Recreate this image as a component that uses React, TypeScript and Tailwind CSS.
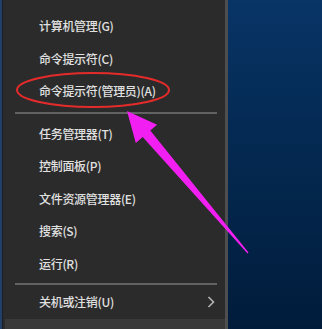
import React from "react";

const font = { fontFamily: '"Noto Sans CJK SC", "Microsoft YaHei", sans-serif' };

function Item({ label, h = "h-[32.5px]", chevron = false }: { label: string; h?: string; chevron?: boolean }) {
  return (
    <div className={`${h} flex items-center pl-[36px] pr-[8px] text-[12px] font-medium tracking-[-0.3px] text-[#e0e0e0] leading-none`}>
      <span className="flex-1 whitespace-nowrap">{label}</span>
      {chevron && (
        <svg width="8" height="12" viewBox="0 0 8 12" className="mr-[2px]">
          <path d="M1.5 1 L6.5 6 L1.5 11" fill="none" stroke="#b4b4b4" strokeWidth="1.6" />
        </svg>
      )}
    </div>
  );
}

function Sep({ h }: { h: string }) {
  return (
    <div className={`${h} flex items-center pl-[12px] pr-[8px]`}>
      <div className="h-[2px] w-full bg-[#626262]" />
    </div>
  );
}

export default function App() {
  const tip = [127, 111];
  const end = [248, 253];
  const dx = end[0] - tip[0];
  const dy = end[1] - tip[1];
  const len = Math.hypot(dx, dy);
  const u = [dx / len, dy / len];
  const p = [u[1], -u[0]];
  const headLen = 30;
  const base = [tip[0] + u[0] * headLen, tip[1] + u[1] * headLen];
  const hw = 14;
  const sw = 5;
  const ew = 0.6;
  const pts = [
    tip,
    [base[0] + p[0] * hw, base[1] + p[1] * hw],
    [base[0] + p[0] * sw, base[1] + p[1] * sw],
    [end[0] + p[0] * ew, end[1] + p[1] * ew],
    [end[0] - p[0] * ew, end[1] - p[1] * ew],
    [base[0] - p[0] * sw, base[1] - p[1] * sw],
    [base[0] - p[0] * hw, base[1] - p[1] * hw],
  ]
    .map((q) => `${q[0].toFixed(1)},${q[1].toFixed(1)}`)
    .join(" ");

  return (
    <div className="relative w-[322px] h-[329px] flex overflow-hidden bg-[#2b2b2b]" style={font}>
      <div className="w-[2px] h-full bg-[#22406a]" />
      <div className="w-[1px] h-full bg-[#1a1f28]" />
      <div className="w-[225px] h-full flex flex-col bg-[#2b2b2b] border-r-[3px] border-[#4e4e4e]">
        <div className="h-[10px]" />
        <Item label="计算机管理(G)" />
        <Item label="命令提示符(C)" />
        <Item label="命令提示符(管理员)(A)" />
        <Sep h="h-[10px]" />
        <Item label="任务管理器(T)" />
        <Item label="控制面板(P)" />
        <Item label="文件资源管理器(E)" />
        <Item label="搜索(S)" />
        <Item label="运行(R)" />
        <Sep h="h-[7px]" />
        <Item label="关机或注销(U)" h="h-[30px]" chevron />
        <div className="h-[2px]" />
        <div className="flex-1 ml-[2px] bg-[#393939]" />
      </div>
      <div className="flex-1 h-full bg-gradient-to-b from-[#083466] via-[#04284f] to-[#011c3b]" />
      <svg className="absolute inset-0 pointer-events-none" width="322" height="329" viewBox="0 0 322 329">
        <ellipse cx="93" cy="90" rx="76" ry="17" fill="none" stroke="#e42b2b" strokeWidth="2" />
        <polygon points={pts} fill="#f21ff2" />
      </svg>
    </div>
  );
}
